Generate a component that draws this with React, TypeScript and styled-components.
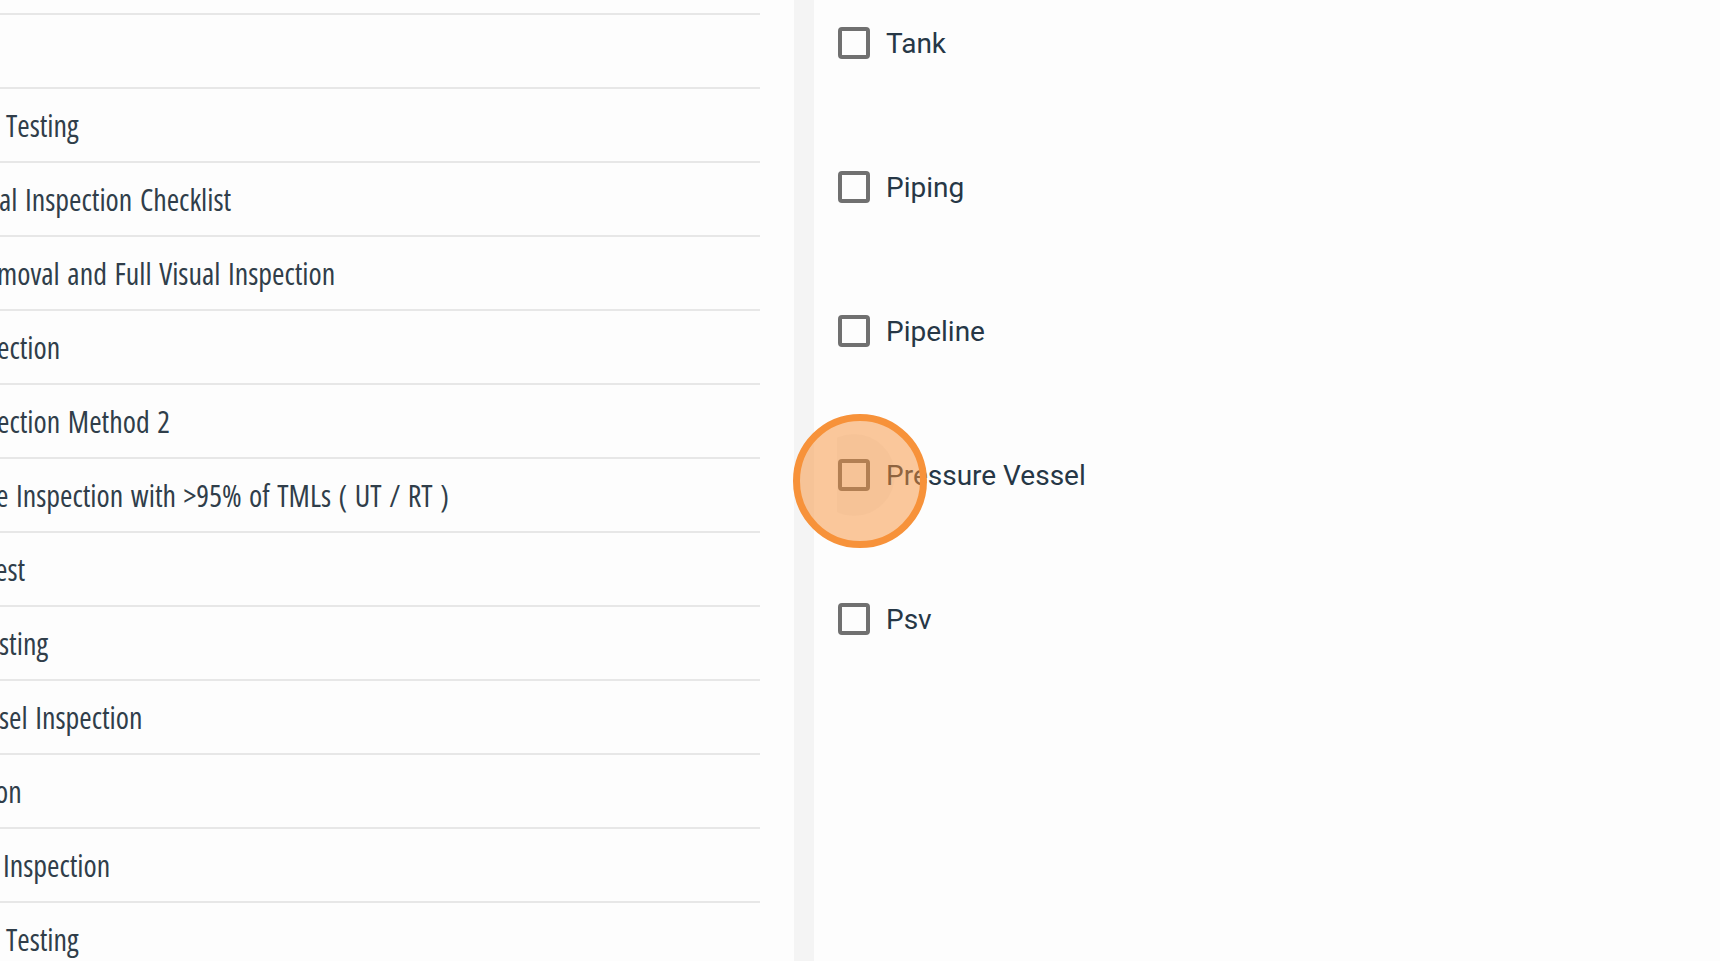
import React from "react";
import styled, { createGlobalStyle } from "styled-components";

const GlobalStyle = createGlobalStyle`
  html, body { margin: 0; padding: 0; background: #fdfdfd; }
  body { overflow: hidden; }
  #root { height: 961px; }
`;

const Page = styled.div`
  display: flex;
  width: 1720px;
  height: 961px;
  overflow: hidden;
  background: #fdfdfd;
  position: relative;
`;

const LeftPane = styled.div`
  width: 794px;
  flex: none;
  overflow: hidden;
  background: #fdfdfd;
`;

const RowList = styled.div`
  width: 760px;
  margin-top: -59px;
  display: flex;
  flex-direction: column;
`;

const Row = styled.div`
  height: 72px;
  border-bottom: 2px solid #e7e7e7;
  display: flex;
  align-items: center;
  overflow: hidden;
`;

const RowText = styled.span<{ $shift: number }>`
  font-family: "Open Sans", sans-serif;
  font-stretch: 75%;
  font-size: 30px;
  font-weight: 400;
  word-spacing: 2px;
  color: #303e4a;
  white-space: nowrap;
  margin-left: ${(p) => p.$shift}px;
  line-height: 1;
  padding-top: 1px;
`;

const Gutter = styled.div`
  width: 20px;
  flex: none;
  background: #f4f4f4;
`;

const RightPane = styled.div`
  flex: 1;
  background: #fdfdfd;
  padding: 27px 0 0 24px;
  display: flex;
  flex-direction: column;
  gap: 112px;
`;

const Option = styled.label`
  display: flex;
  align-items: center;
  gap: 16px;
  height: 32px;
  position: relative;
`;

const BoxWrap = styled.span`
  position: relative;
  width: 32px;
  height: 32px;
  flex: none;
`;

const Box = styled.span`
  display: block;
  box-sizing: border-box;
  width: 32px;
  height: 32px;
  border: 4px solid #707070;
  border-radius: 4px;
  background: #fdfdfd;
`;

const RippleClip = styled.span`
  position: absolute;
  left: -1px;
  top: -26px;
  width: 60px;
  height: 84px;
  overflow: hidden;
  pointer-events: none;
`;

const Ripple = styled.span`
  position: absolute;
  left: -24px;
  top: 1px;
  width: 82px;
  height: 82px;
  border-radius: 50%;
  background: rgba(0, 0, 0, 0.03);
`;

const Label = styled.span`
  font-family: Roboto, "Liberation Sans", sans-serif;
  font-size: 28px;
  font-weight: 400;
  color: #263746;
  line-height: 1;
  white-space: nowrap;
  padding-top: 2px;
`;

const ClickMarker = styled.div`
  position: absolute;
  left: 793px;
  top: 414px;
  width: 134px;
  height: 134px;
  box-sizing: border-box;
  border-radius: 50%;
  border: 7px solid #f7923a;
  background: rgba(247, 146, 58, 0.5);
  pointer-events: none;
`;

const rows: { text: string; shift: number }[] = [
  { text: "", shift: 0 },
  { text: "", shift: 0 },
  { text: "Testing", shift: 6 },
  { text: "al Inspection Checklist", shift: -1 },
  { text: "moval and Full Visual Inspection", shift: -3 },
  { text: "ection", shift: -3 },
  { text: "ection Method 2", shift: -3 },
  { text: "e Inspection with >95% of TMLs ( UT / RT )", shift: -4 },
  { text: "est", shift: -5 },
  { text: "sting", shift: -1 },
  { text: "sel Inspection", shift: -1 },
  { text: "on", shift: -5 },
  { text: "Inspection", shift: 3 },
  { text: "Testing", shift: 6 },
];

const options: { label: string; active?: boolean }[] = [
  { label: "Tank" },
  { label: "Piping" },
  { label: "Pipeline" },
  { label: "Pressure Vessel", active: true },
  { label: "Psv" },
];

export default function App() {
  return (
    <>
      <GlobalStyle />
      <Page>
        <LeftPane>
          <RowList>
            {rows.map((r, i) => (
              <Row key={i}>
                <RowText $shift={r.shift}>{r.text}</RowText>
              </Row>
            ))}
          </RowList>
        </LeftPane>
        <Gutter />
        <RightPane>
          {options.map((o) => (
            <Option key={o.label}>
              <BoxWrap>
                {o.active && (
                  <RippleClip>
                    <Ripple />
                  </RippleClip>
                )}
                <Box />
              </BoxWrap>
              <Label>{o.label}</Label>
            </Option>
          ))}
        </RightPane>
        <ClickMarker />
      </Page>
    </>
  );
}
